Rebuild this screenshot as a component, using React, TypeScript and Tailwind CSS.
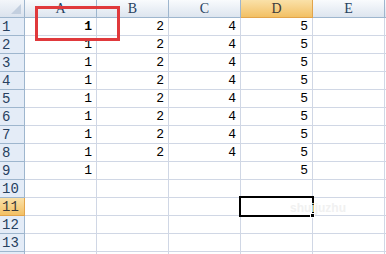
import React from "react";

const cols = ["A", "B", "C", "D", "E"];
const data: (number | null)[][] = [
  [1, 2, 4, 5, null],
  [1, 2, 4, 5, null],
  [1, 2, 4, 5, null],
  [1, 2, 4, 5, null],
  [1, 2, 4, 5, null],
  [1, 2, 4, 5, null],
  [1, 2, 4, 5, null],
  [1, 2, 4, 5, null],
  [1, null, null, 5, null],
  [null, null, null, null, null],
  [null, null, null, null, null],
  [null, null, null, null, null],
  [null, null, null, null, null],
  [null, null, null, null, null],
];

export default function App() {
  return (
    <div
      className="relative w-[386px] h-[254px] overflow-hidden bg-white"
      style={{ fontFamily: '"Liberation Mono", monospace' }}
    >
      <div className="grid grid-cols-[25px_repeat(5,72px)_72px]">
        {/* header row */}
        <div className="h-[18px] border-r border-b border-[#9eb6ce] bg-gradient-to-b from-[#f3f6fa] to-[#dbe3ee] relative">
          <div className="absolute right-[3px] bottom-[3px] w-0 h-0 border-l-[10px] border-l-transparent border-b-[10px] border-b-[#c3cfdf]" />
        </div>
        {cols.concat([""]).map((c, i) => (
          <div
            key={i}
            className={
              "h-[18px] border-r border-b flex items-center justify-center text-[14px] leading-none " +
              (c === "D"
                ? "bg-gradient-to-b from-[#fae1a8] to-[#f2c063] border-[#e2a44b] text-[#3b3b3b]"
                : "bg-gradient-to-b from-[#f9fbfd] to-[#dde5ef] border-[#9eb6ce] text-[#27415f]")
            }
            style={{ fontFamily: '"Liberation Serif", serif' }}
          >
            {c}
          </div>
        ))}
        {data.map((row, r) => (
          <React.Fragment key={r}>
            <div
              className={
                "h-[18px] border-r border-b flex items-center pl-[2px] text-[14px] leading-none " +
                (r === 10
                  ? "bg-gradient-to-b from-[#fae1a8] to-[#f2c063] border-[#e2a44b] text-[#3b3b3b]"
                  : "bg-[#e4ecf7] border-[#9eb6ce] text-[#27415f]")
              }
            >
              {r < 13 ? r + 1 : ""}
            </div>
            {row.concat([null]).map((v, c) => (
              <div
                key={c}
                className={
                  "h-[18px] border-r border-b border-[#d0d7e5] flex items-center justify-end pr-[4px] text-[13px] leading-none text-black " +
                  (r === 0 && c === 0 ? "font-bold" : "")
                }
              >
                {v ?? ""}
              </div>
            ))}
          </React.Fragment>
        ))}
      </div>

      {/* red annotation box */}
      <div className="absolute left-[35px] top-[6px] w-[85px] h-[35px] border-[3px] border-[#e0393c]" />

      {/* active cell D11 */}
      <div className="absolute left-[239px] top-[196px] w-[75px] h-[21px] border-2 border-black" />
      <div className="absolute left-[310px] top-[213px] w-[5px] h-[5px] bg-black border border-white" />

      {/* faint watermark */}
      <div
        className="absolute left-[290px] top-[199px] text-[12px] text-[#f1f1f1] font-bold"
        style={{ fontFamily: '"Liberation Sans", sans-serif' }}
      >
        shuijuzhu
      </div>
    </div>
  );
}
